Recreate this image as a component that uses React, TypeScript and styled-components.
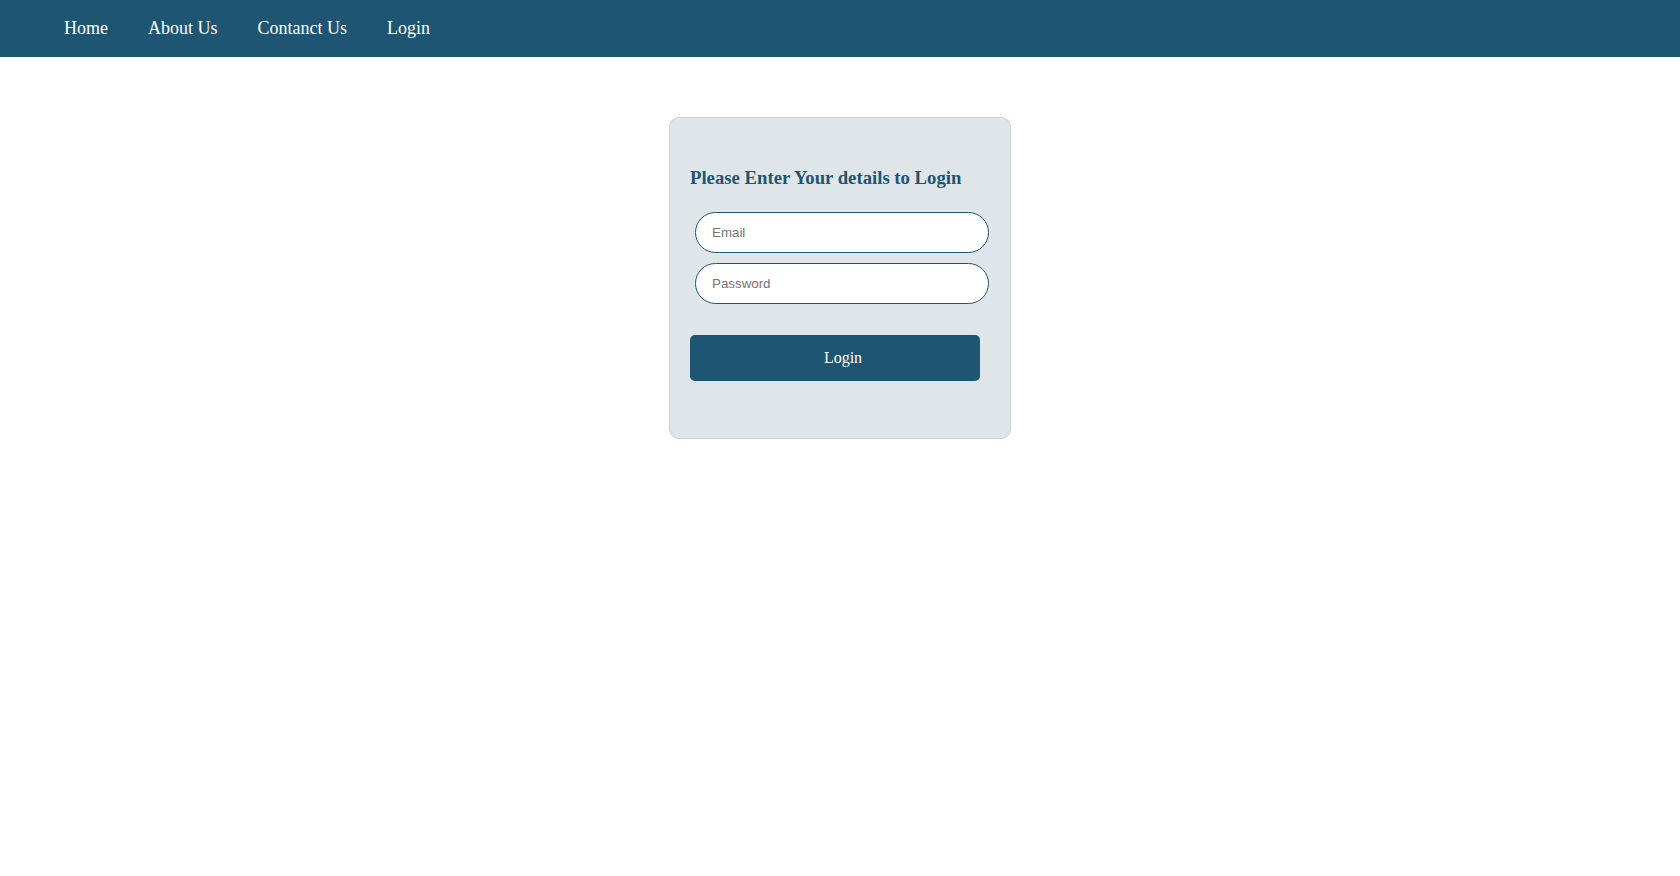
import React, { FC } from 'react';
import styled, { createGlobalStyle } from 'styled-components';

const GlobalStyle = createGlobalStyle`
  body {
    margin: 0;
    background: #ffffff;
    font-family: "Liberation Serif", "Times New Roman", serif;
  }
`;

const NavBar = styled.nav`
  display: flex;
  align-items: center;
  height: 57px;
  padding-left: 44px;
  background: #1e5572;
`;

const NavLink = styled.a`
  padding: 0 20px;
  color: #ffffff;
  font-size: 18px;
  text-decoration: none;
  cursor: pointer;
`;

const Main = styled.main`
  display: flex;
  justify-content: center;
  padding-top: 60px;
`;

const Card = styled.div`
  display: flex;
  flex-direction: column;
  width: 300px;
  padding: 30px 20px 57px;
  background: #dfe6ea;
  border: 1px solid #c6d1d8;
  border-radius: 10px;
`;

const Title = styled.h3`
  margin: 18.72px 0;
  color: #1e5572;
  font-size: 18.72px;
  font-weight: 700;
`;

const Field = styled.input`
  box-sizing: border-box;
  width: 294px;
  height: 41px;
  margin: 5px 0 5px 5px;
  padding: 0 16px;
  border: 1px solid #1e5572;
  border-radius: 21px;
  background: #ffffff;
  font-family: "Liberation Sans", Arial, sans-serif;
  font-size: 13.33px;
  outline: none;

  &::placeholder {
    color: #757575;
  }
`;

const LoginButton = styled.button`
  box-sizing: border-box;
  width: 290px;
  height: 46px;
  margin-top: 26px;
  padding: 0 0 0 16px;
  border: none;
  border-radius: 5px;
  background: #1e5572;
  color: #ffffff;
  font-family: "Liberation Serif", "Times New Roman", serif;
  font-size: 16px;
  cursor: pointer;
`;

const links = ['Home', 'About Us', 'Contanct Us', 'Login'];

const App: FC = () => (
  <>
    <GlobalStyle />
    <NavBar>
      {links.map((l) => (
        <NavLink key={l}>{l}</NavLink>
      ))}
    </NavBar>
    <Main>
      <Card>
        <Title>Please Enter Your details to Login</Title>
        <Field type="email" placeholder="Email" />
        <Field type="password" placeholder="Password" />
        <LoginButton>Login</LoginButton>
      </Card>
    </Main>
  </>
);

export default App;
